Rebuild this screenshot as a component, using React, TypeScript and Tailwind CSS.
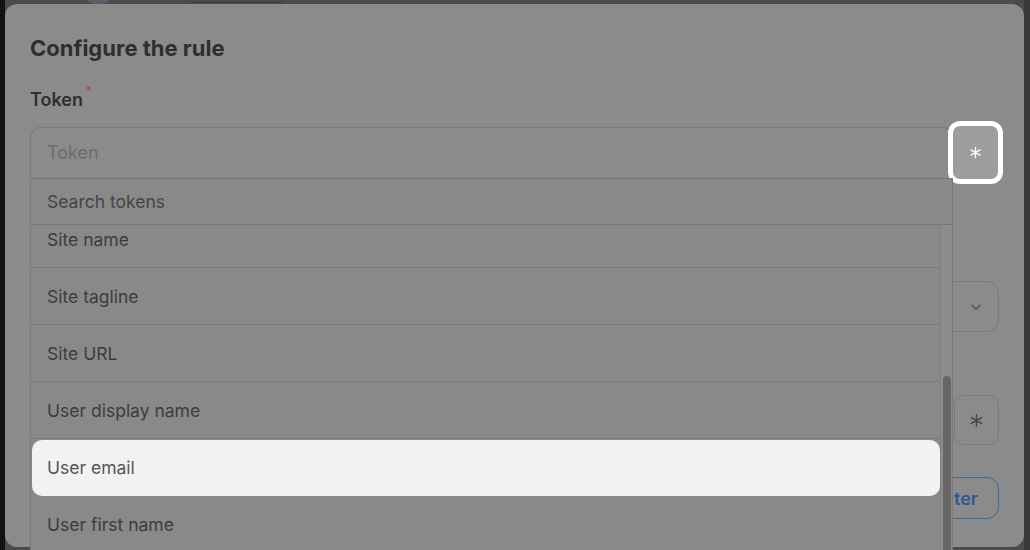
import React from "react";

const tokens = ["Site name", "Site tagline", "Site URL", "User display name", "User email", "User first name"];

const Asterisk: React.FC<{className?: string}> = ({className}) => (
    <svg viewBox="0 0 16 16" className={className} fill="none" stroke="currentColor" strokeWidth={1.4} strokeLinecap="round">
        <path d="M8 2.5v11M3.2 5.2l9.6 5.6M12.8 5.2l-9.6 5.6"/>
    </svg>
);

const App: React.FC = () => {
    return (
        <div
            className="relative w-[1030px] h-[550px] overflow-hidden bg-[#4b4b4b]"
            style={{fontFamily: "Inter, 'Noto Sans', sans-serif"}}
        >
            {/* page behind the dialog (dimmed) */}
            <div className="absolute left-0 top-0 h-full w-[5px] bg-[#121212]"/>
            <div className="absolute left-[80px] -top-[30px] h-[34px] w-[36px] rounded-full bg-[#56606c]"/>
            <div className="absolute left-[190px] -top-[20px] h-[23px] w-[96px] rounded-[6px] border border-[#3c3c3c]"/>
            <div className="absolute right-0 top-0 h-full w-[6px] bg-[#3a3a3a]"/>

            {/* Dialog */}
            <div className="absolute left-[5px] top-[4px] w-[1019px] h-[543px] rounded-[12px] bg-[#8b8b8b] px-[25px] pt-[30px]">
                <h2 className="text-[22px] leading-[28px] font-bold text-[#2e2e2e]">Configure the rule</h2>

                <div className="mt-[26px] flex items-start">
                    <span className="text-[18px] leading-[24px] font-semibold text-[#2e2e2e]">Token</span>
                    <span className="ml-[3px] -mt-[6px] text-[11px] text-[#a04848]">*</span>
                </div>

                <div className="mt-[15px] flex items-stretch h-[51px]">
                    <div className="flex-1 rounded-t-[10px] border border-b-0 border-[#7a7a7a] px-[16px] pb-[2px] flex items-center text-[18px] text-[#6c6c6c]">
                        Token
                    </div>
                    <div className="relative w-[45px]">
                        <div className="absolute -left-[6px] -right-[4px] -top-[6px] -bottom-[6px] rounded-[12px] border-[5px] border-white bg-[#9d9d9d] flex items-center justify-center">
                            <Asterisk className="w-[15px] h-[15px] text-white"/>
                        </div>
                    </div>
                </div>

                {/* fields behind the open list */}
                <div className="mt-[103px] h-[51px] rounded-[12px] border border-[#7a7a7a] flex items-center justify-end pr-[13px]">
                    <svg viewBox="0 0 16 16" className="w-[18px] h-[18px] text-[#555]" fill="none" stroke="currentColor" strokeWidth={1.3}>
                        <path d="M4 6l4 4 4-4"/>
                    </svg>
                </div>

                <div className="mt-[63px] flex h-[50px] gap-[8px]">
                    <div className="flex-1 rounded-[12px] border border-[#7a7a7a]"/>
                    <div className="w-[45px] rounded-[10px] border border-[#7a7a7a] flex items-center justify-center">
                        <Asterisk className="w-[17px] h-[17px] text-[#444]"/>
                    </div>
                </div>

                <div className="mt-[32px] flex justify-end">
                    <button className="h-[42px] px-[20px] rounded-[12px] border-[1.5px] border-[#3a68a3] text-[18px] font-semibold text-[#2a5a94]">
                        Filter
                    </button>
                </div>
            </div>

            {/* open token list */}
            <div className="absolute left-[30px] top-[178px] w-[923px] h-[380px] flex flex-col bg-[#898989] border-x border-[#7a7a7a]">
                <div className="h-[47px] shrink-0 border-y border-[#777] px-[16px] pt-[2px] flex items-center text-[17.5px] text-[#444]">
                    Search tokens
                </div>
                <div className="flex flex-1 overflow-hidden">
                    <div className="flex-1 overflow-hidden">
                        <div className="-mt-[14px] flex flex-col">
                            {tokens.map((t) =>
                                t === "User email" ? (
                                    <div key={t} className="h-[57px] shrink-0 flex items-center pl-[1px]">
                                        <div className="h-[56px] w-full rounded-[10px] bg-[#f2f2f2] px-[15px] pt-[2px] flex items-center text-[17.5px] text-[#555]">
                                            {t}
                                        </div>
                                    </div>
                                ) : (
                                    <div key={t} className="h-[57px] shrink-0 border-b border-[#7b7b7b] px-[16px] pt-[2px] flex items-center text-[17.5px] text-[#3c3c3c]">
                                        {t}
                                    </div>
                                )
                            )}
                        </div>
                    </div>
                    {/* scrollbar */}
                    <div className="w-[12px] bg-[#8d8d8d] border-l border-[#7f7f7f] pt-[151px] flex justify-center">
                        <div className="w-[8px] h-full rounded-full bg-[#666]"/>
                    </div>
                </div>
            </div>
        </div>
    );
};

export default App;
